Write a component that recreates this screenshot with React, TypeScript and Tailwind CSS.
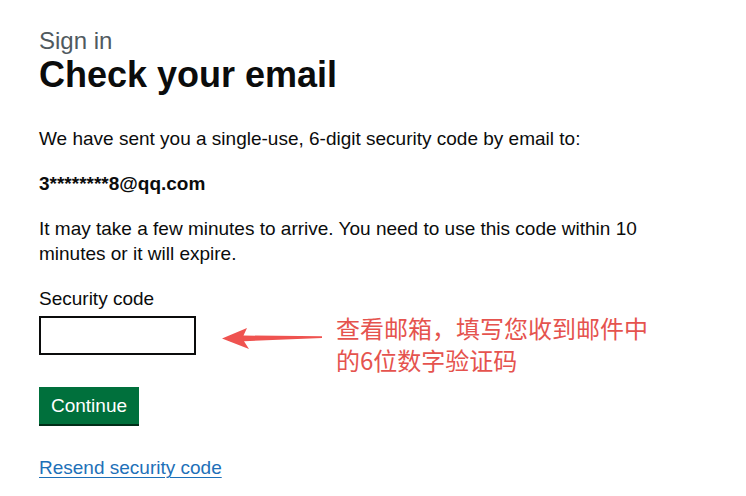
const ArrowLeft = () => (
  <svg width="108" height="30" viewBox="0 0 108 30" className="mt-[12px] shrink-0">
    <path
      d="M4 14.5 L29 4 L25.5 11.5 L104 12.3 L104 13.9 L26 17.2 L31 25 Z"
      fill="#ef5350"
    />
  </svg>
);

export default function App() {
  return (
    <div
      className="min-h-[496px] w-full bg-white pl-[39px] pt-[28px] text-[#0b0c0c]"
      style={{ fontFamily: '"Liberation Sans", Arial, sans-serif' }}
    >
      {/* Heading */}
      <span className="block text-[24px] leading-[25px] text-[#505a5f]">Sign in</span>
      <h1 className="mt-[2px] text-[36px] leading-[40px] font-bold">Check your email</h1>

      {/* Body */}
      <p className="mt-[31px] text-[19px] leading-[25px]">
        We have sent you a single-use, 6-digit security code by email to:
      </p>
      <p className="mt-[20px] text-[19px] leading-[25px] font-bold">3********8@qq.com</p>
      <p className="mt-[20px] w-[620px] text-[19px] leading-[25px]">
        It may take a few minutes to arrive. You need to use this code within 10 minutes or it will
        expire.
      </p>

      {/* Security code field */}
      <label htmlFor="code" className="mt-[20px] block text-[19px] leading-[25px]">
        Security code
      </label>
      <div className="relative mt-[5px]">
        <input
          id="code"
          type="text"
          inputMode="numeric"
          className="block h-[39px] w-[157px] border-2 border-[#0b0c0c] bg-white px-[5px] text-[19px] outline-none"
        />

        {/* Annotation */}
        <div className="absolute left-[179px] top-[-4px] flex items-start">
          <ArrowLeft />
          <div
            className="ml-[10px] w-[320px] text-[24px] leading-[32px] text-[#e5534e]"
            style={{ fontFamily: '"Noto Sans CJK SC", "Liberation Sans", sans-serif' }}
          >
            查看邮箱，填写您收到邮件中
            <br />
            的6位数字验证码
          </div>
        </div>
      </div>

      {/* Actions */}
      <button
        type="button"
        className="mt-[32px] block h-[37px] w-[100px] bg-[#00703c] text-center text-[19px] leading-[37px] text-white shadow-[0_2px_0_#002d18]"
      >
        Continue
      </button>
      <a
        href="#"
        className="mt-[31px] inline-block text-[19px] leading-[25px] text-[#1d70b8] underline decoration-1 underline-offset-[3px]"
      >
        Resend security code
      </a>
    </div>
  );
}
